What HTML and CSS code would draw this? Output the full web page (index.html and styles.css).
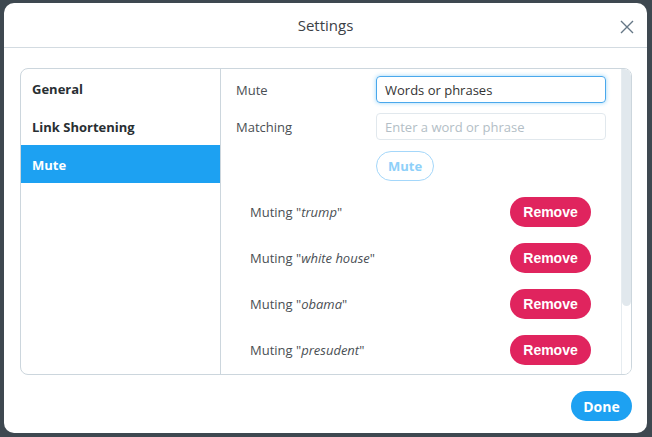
FILE: index.html
```html
<!DOCTYPE html>
<html>
<head>
<meta charset="utf-8">
<link rel="stylesheet" href="styles.css">
</head>
<body>
<div class="modal">
  <div class="header">
    <div class="title">Settings</div>
    <svg class="close" width="16" height="16" viewBox="0 0 16 16"><path d="M2 2 L14 14 M14 2 L2 14" stroke="#657786" stroke-width="1.4" fill="none"/></svg>
  </div>
  <div class="body">
    <div class="panel">
      <div class="sidebar">
        <div class="nav">General</div>
        <div class="nav">Link Shortening</div>
        <div class="nav active">Mute</div>
      </div>
      <div class="content">
        <div class="form-row">
          <div class="label">Mute</div>
          <div class="input focus">Words or phrases</div>
        </div>
        <div class="form-row second">
          <div class="label">Matching</div>
          <div class="input placeholder">Enter a word or phrase</div>
        </div>
        <div class="form-row third">
          <div class="label"></div>
          <button class="mute-btn">Mute</button>
        </div>
        <div class="list">
          <div class="item"><span>Muting "<i>trump</i>"</span><button class="remove">Remove</button></div>
          <div class="item"><span>Muting "<i>white house</i>"</span><button class="remove">Remove</button></div>
          <div class="item"><span>Muting "<i>obama</i>"</span><button class="remove">Remove</button></div>
          <div class="item"><span>Muting "<i>presudent</i>"</span><button class="remove">Remove</button></div>
        </div>
      </div>
      <div class="scrollbar"><div class="thumb"></div></div>
    </div>
  </div>
  <div class="footer">
    <button class="done">Done</button>
  </div>
</div>
</body>
</html>
```

FILE: styles.css
```css
html, body {
  margin: 0;
  padding: 0;
}
body {
  width: 652px;
  height: 437px;
  background: #3e4850;
  font-family: "Open Sans", "Noto Sans", sans-serif;
  overflow: hidden;
  padding-top: 3px;
  box-sizing: border-box;
}
.modal {
  margin-left: 4px;
  width: 643px;
  height: 430px;
  background: #fff;
  border-radius: 10px;
  display: flex;
  flex-direction: column;
}
.header {
  height: 44px;
  border-bottom: 1px solid #d3dbe1;
  display: flex;
  align-items: center;
  justify-content: center;
  position: relative;
}
.title {
  font-size: 15px;
  color: #3c4146;
}
.close {
  position: absolute;
  right: 12px;
  top: 16px;
}
.body {
  padding: 20px 15px 0 16px;
}
.panel {
  height: 307px;
  box-sizing: border-box;
  border: 1px solid #ccd6dd;
  border-radius: 8px;
  display: flex;
  overflow: hidden;
}
.sidebar {
  width: 200px;
  flex: none;
  box-sizing: border-box;
  border-right: 1px solid #ccd6dd;
}
.nav {
  height: 38px;
  box-sizing: border-box;
  padding-top: 1px;
  display: flex;
  align-items: center;
  padding-left: 11px;
  font-size: 13px;
  font-weight: 700;
  color: #292f33;
}
.nav.active {
  background: #1da1f2;
  color: #fff;
}
.content {
  flex: 1;
  overflow: hidden;
  padding-top: 7px;
}
.scrollbar {
  width: 10px;
  flex: none;
  box-sizing: border-box;
  border-left: 1px solid #e6ecf0;
  background: #fff;
}
.thumb {
  height: 237px;
  background: #e1e8ed;
  border-radius: 0 0 5px 5px;
}
.form-row {
  display: flex;
  align-items: center;
  padding: 0 15px;
}
.form-row.second {
  margin-top: 10px;
}
.form-row.third {
  margin-top: 11px;
}
.label {
  width: 140px;
  flex: none;
  font-size: 13px;
  color: #4a4f54;
}
.input {
  width: 230px;
  height: 27px;
  box-sizing: border-box;
  border: 1px solid #e1e8ed;
  border-radius: 4px;
  padding-left: 8px;
  font-size: 13px;
  display: flex;
  align-items: center;
  color: #333;
}
.input.focus {
  border-color: #4aa8ec;
  box-shadow: 0 0 4px rgba(29, 161, 242, 0.45);
}
.input.placeholder {
  color: #b3bec6;
}
.mute-btn {
  width: 58px;
  height: 30px;
  border: 1px solid #a4d7fa;
  border-radius: 15px;
  background: #fff;
  color: #8ed0f9;
  font-family: "Open Sans", "Noto Sans", sans-serif;
  font-weight: 700;
  font-size: 13px;
  padding: 0;
}
.list {
  margin-top: 8px;
  padding: 0 30px 0 29px;
}
.item {
  height: 46px;
  display: flex;
  align-items: center;
  justify-content: space-between;
  font-size: 13px;
  color: #4a4f54;
}
.item i {
  font-style: italic;
}
.remove {
  width: 81px;
  height: 30px;
  border: none;
  border-radius: 15px;
  background: #e0245e;
  color: #fff;
  font-family: "Liberation Sans", Arial, sans-serif;
  font-weight: 700;
  font-size: 14px;
  padding: 0;
}
.footer {
  display: flex;
  justify-content: flex-end;
  padding: 16px 15px 0 0;
}
.done {
  width: 61px;
  height: 30px;
  border: none;
  border-radius: 15px;
  background: #1da1f2;
  color: #fff;
  font-family: "Open Sans", "Noto Sans", sans-serif;
  font-weight: 700;
  font-size: 14px;
  padding: 0;
}
```
